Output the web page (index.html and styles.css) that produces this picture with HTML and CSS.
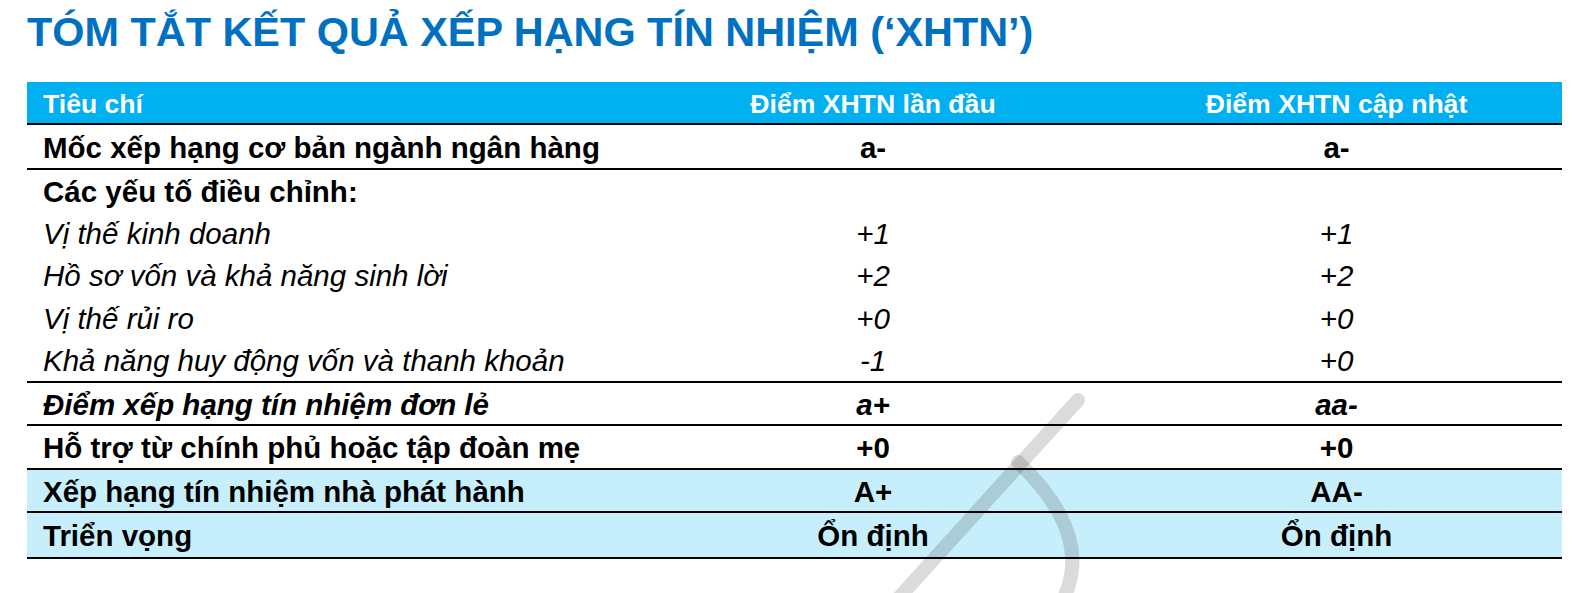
FILE: index.html
```html
<!DOCTYPE html>
<html lang="vi">
<head>
<meta charset="utf-8">
<title>Tóm tắt kết quả xếp hạng tín nhiệm</title>
<link rel="stylesheet" href="styles.css">
</head>
<body>
<div class="page">
  <h1 class="title">TÓM TẮT KẾT QUẢ XẾP HẠNG TÍN NHIỆM (‘XHTN’)</h1>
  <div class="table">
    <div class="row head">
      <div class="c1">Tiêu chí</div>
      <div class="c2">Điểm XHTN lần đầu</div>
      <div class="c3">Điểm XHTN cập nhật</div>
    </div>
    <div class="row bold line h45">
      <div class="c1">Mốc xếp hạng cơ bản ngành ngân hàng</div>
      <div class="c2">a-</div>
      <div class="c3">a-</div>
    </div>
    <div class="row bold h42">
      <div class="c1">Các yếu tố điều chỉnh:</div>
      <div class="c2"></div>
      <div class="c3"></div>
    </div>
    <div class="row ital h42">
      <div class="c1">Vị thế kinh doanh</div>
      <div class="c2">+1</div>
      <div class="c3">+1</div>
    </div>
    <div class="row ital h42">
      <div class="c1">Hồ sơ vốn và khả năng sinh lời</div>
      <div class="c2">+2</div>
      <div class="c3">+2</div>
    </div>
    <div class="row ital h43">
      <div class="c1">Vị thế rủi ro</div>
      <div class="c2">+0</div>
      <div class="c3">+0</div>
    </div>
    <div class="row ital line h44">
      <div class="c1">Khả năng huy động vốn và thanh khoản</div>
      <div class="c2">-1</div>
      <div class="c3">+0</div>
    </div>
    <div class="row bold ital line h43">
      <div class="c1">Điểm xếp hạng tín nhiệm đơn lẻ</div>
      <div class="c2">a+</div>
      <div class="c3">aa-</div>
    </div>
    <div class="row bold line h44">
      <div class="c1">Hỗ trợ từ chính phủ hoặc tập đoàn mẹ</div>
      <div class="c2">+0</div>
      <div class="c3">+0</div>
    </div>
    <div class="row bold line tint h43">
      <div class="c1">Xếp hạng tín nhiệm nhà phát hành</div>
      <div class="c2">A+</div>
      <div class="c3">AA-</div>
    </div>
    <div class="row bold line tint h46">
      <div class="c1">Triển vọng</div>
      <div class="c2">Ổn định</div>
      <div class="c3">Ổn định</div>
    </div>
  </div>
  <svg class="watermark" width="300" height="220" viewBox="0 0 300 220" aria-hidden="true">
    <path d="M228 24 L45 226" />
    <path d="M168 86 Q246 160 212 226" />
  </svg>
</div>
</body>
</html>
```

FILE: styles.css
```css
html, body {
  margin: 0;
  padding: 0;
  background: #ffffff;
}

body {
  font-family: "Liberation Sans", Arial, sans-serif;
  color: #000000;
}

.page {
  position: relative;
  width: 1583px;
  height: 593px;
  overflow: hidden;
  padding-left: 27px;
  box-sizing: border-box;
}

.title {
  margin: 8px 0 0 0;
  font-size: 41.4px;
  line-height: 48px;
  font-weight: bold;
  color: #0070c0;
}

.table {
  margin-top: 26px;
  width: 1535px;
}

.row {
  display: grid;
  grid-template-columns: 620px 452px 1fr;
  align-items: center;
  box-sizing: border-box;
  font-size: 29.5px;
  line-height: 34px;
}

.row > div {
  white-space: nowrap;
  padding-top: 2px;
}

.c1 {
  padding-left: 16px;
}

.c2 {
  text-align: center;
}

.c3 {
  text-align: center;
  padding-left: 12px;
}

.head {
  height: 43px;
  background: #00b0f0;
  color: #ffffff;
  font-size: 26.6px;
  font-weight: bold;
  border-bottom: 2px solid #000000;
}

.line {
  border-bottom: 2px solid #000000;
}

.bold {
  font-weight: bold;
}

.ital {
  font-style: italic;
}

.tint {
  background: #c7eefb;
}

.h42 { height: 42px; }
.h43 { height: 43px; }
.h44 { height: 44px; }
.h45 { height: 45px; }
.h46 { height: 46px; }

.watermark {
  position: absolute;
  left: 850px;
  top: 376px;
  pointer-events: none;
}

.watermark path {
  fill: none;
  stroke: rgba(0, 0, 0, 0.14);
  stroke-width: 14;
  stroke-linecap: round;
}
```
